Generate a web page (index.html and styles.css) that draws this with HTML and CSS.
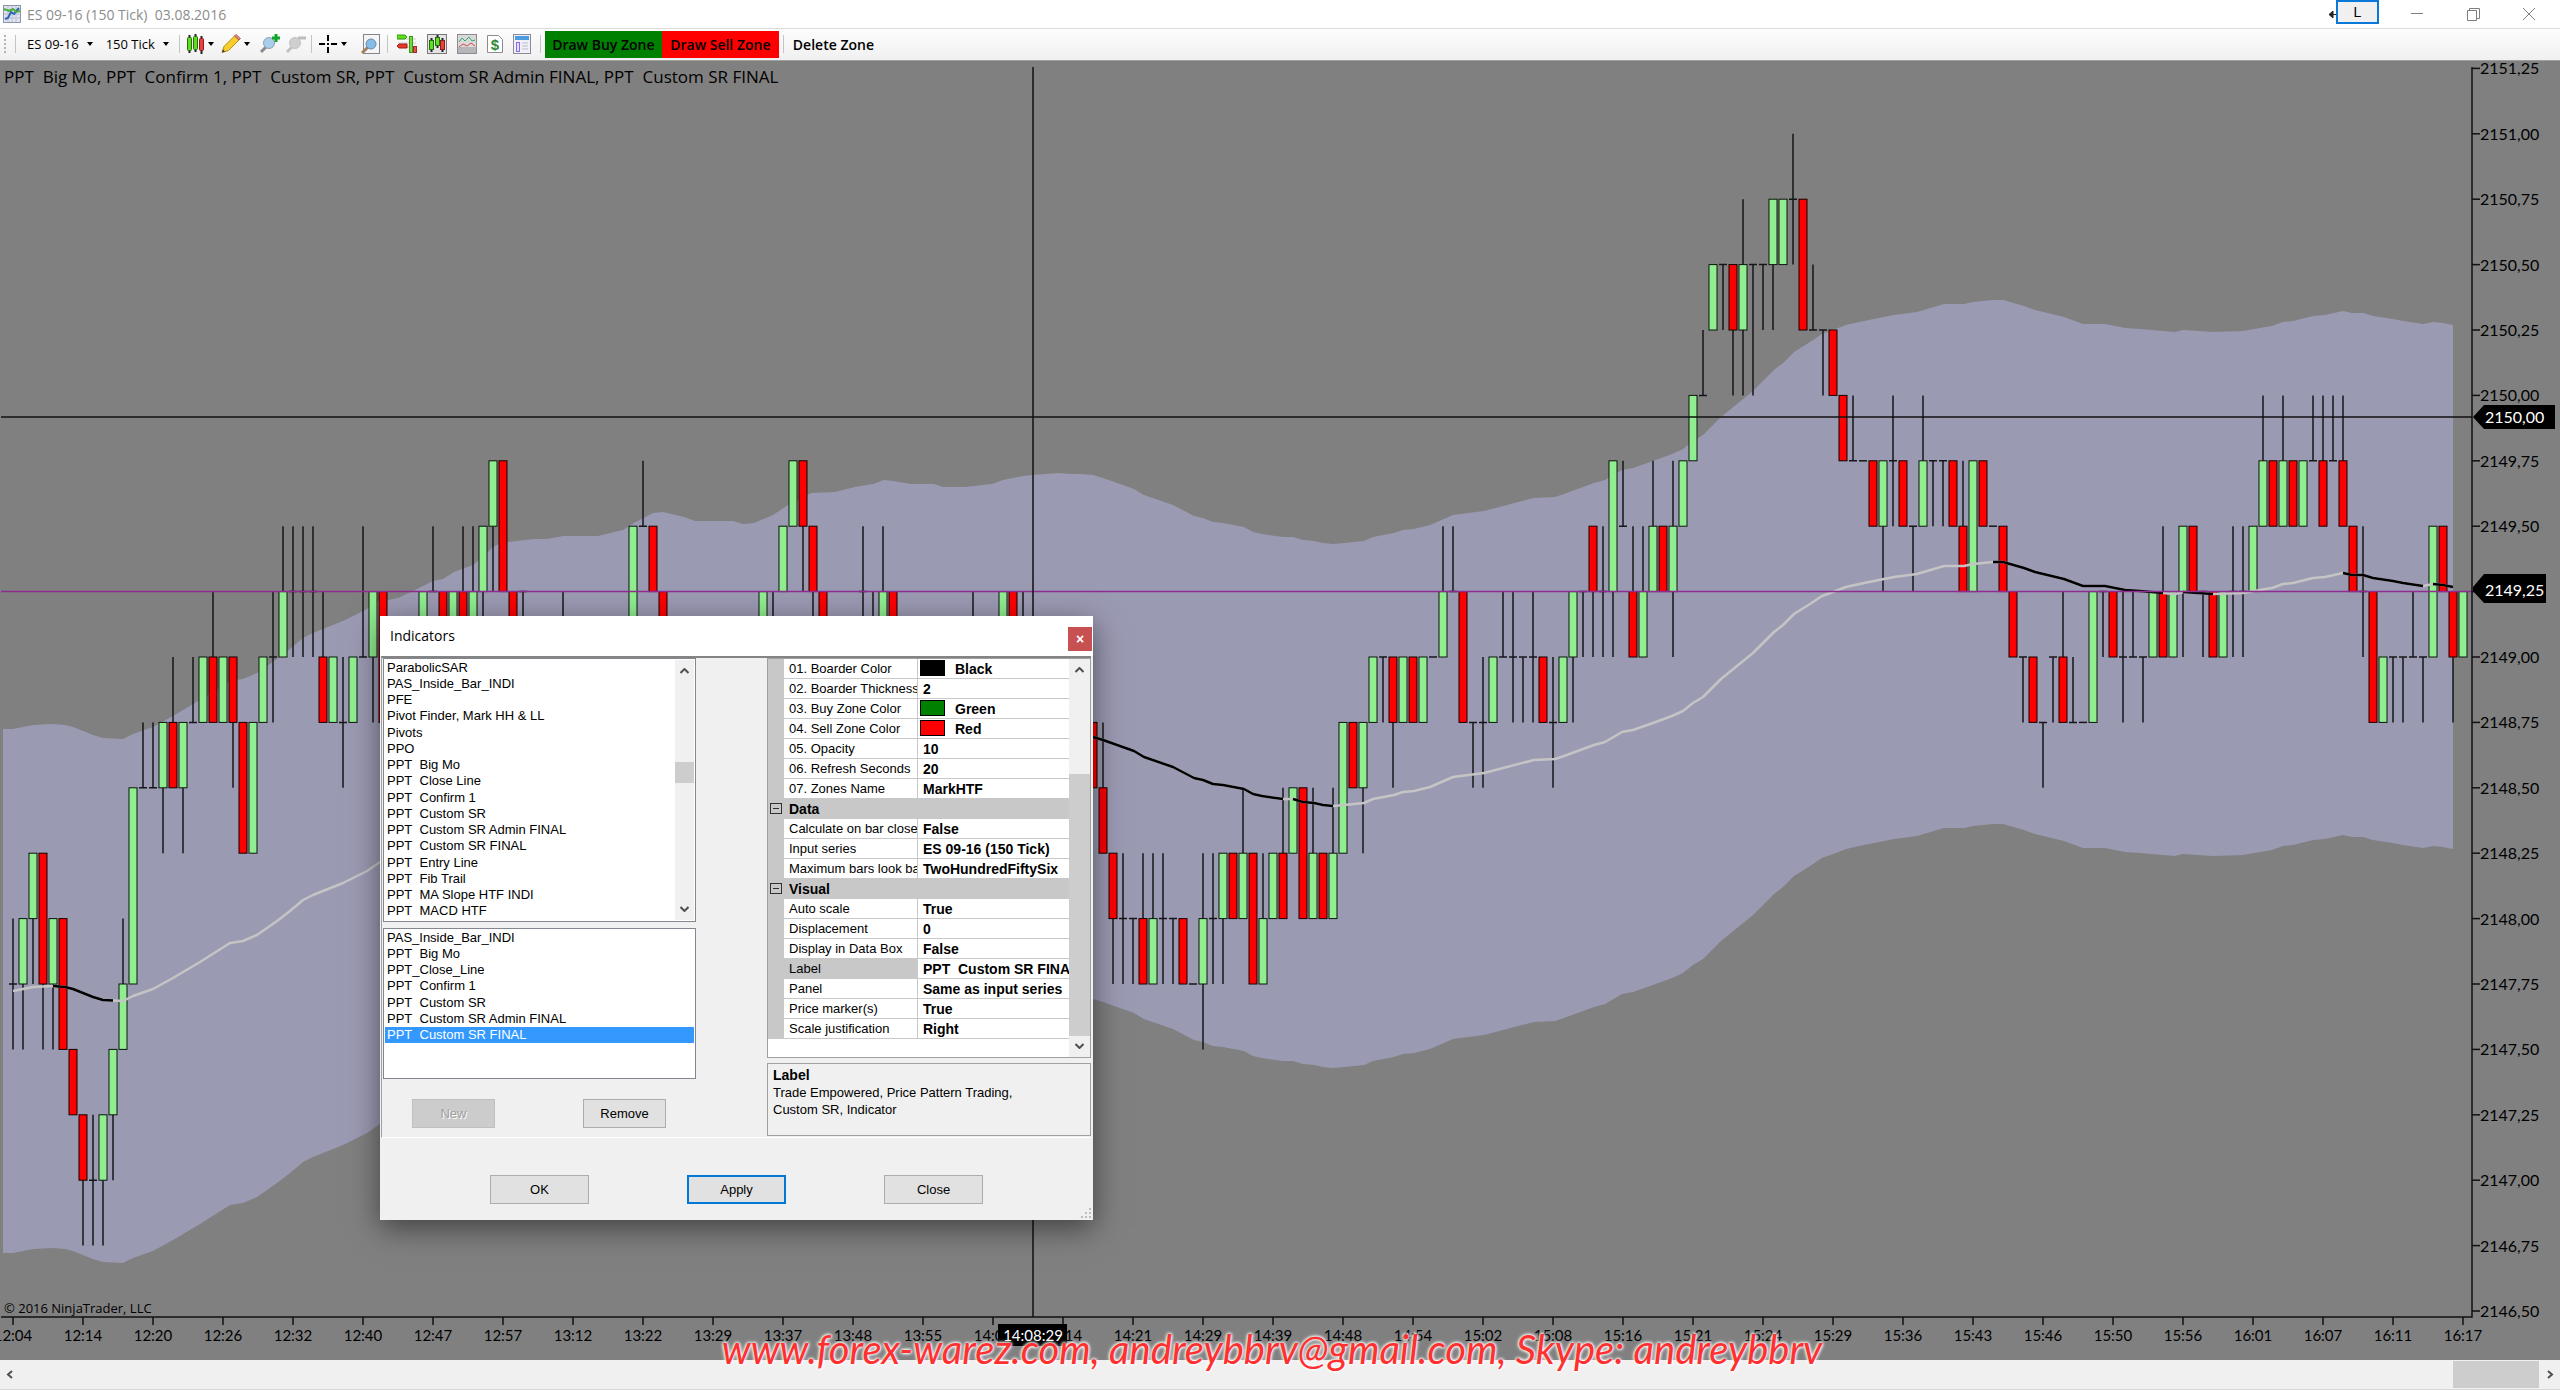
FILE: index.html
```html
<!DOCTYPE html>
<html lang="en">
<head>
    <meta charset="UTF-8">
    <meta name="viewport" content="width=device-width, initial-scale=1.0">
    <title>ES 09-16 (150 Tick)  03.08.2016</title>
    <link rel="stylesheet" href="styles.css">
</head>
<body>
    <header class="titlebar">
        <svg class="app-icon" width="18" height="18" viewBox="0 0 18 18">
            <rect x="0.5" y="0.5" width="17" height="17" fill="#dfe3f0" stroke="#8f95ad"/>
            <path d="M1 5h16M1 9h16M1 13h16M5 1v16M9 1v16M13 1v16" stroke="#b9bfd6" fill="none"/>
            <path d="M2 14l3-1 3-6 3 2 5-6" stroke="#2f62b5" stroke-width="2" fill="none"/>
            <path d="M1 4l5 2 4-2 3 3 4-1" stroke="#4caf3a" stroke-width="2" fill="none"/>
        </svg>
        <h1>ES 09-16 (150 Tick)&nbsp; 03.08.2016</h1>
        <div class="window-controls">
            <svg class="link-arrow" width="7" height="9" viewBox="0 0 7 9"><path d="M0 4.500L4 1v7zM3 4.500h4" stroke="#222" fill="#222"/></svg>
            <button class="link-button" type="button">L</button>
            <button class="win-button" type="button" aria-label="Minimize"><svg width="12" height="12" viewBox="0 0 12 12"><path d="M0 5.500h12"/></svg></button>
            <button class="win-button" type="button" aria-label="Restore"><svg width="13" height="13" viewBox="0 0 13 13"><path d="M0.500 2.500h9v10h-9zM2.500 2.500v-2h10v10h-3"/></svg></button>
            <button class="win-button" type="button" aria-label="Close window"><svg width="12" height="12" viewBox="0 0 12 12"><path d="M0 0l12 12M12 0l-12 12"/></svg></button>
        </div>
    </header>

    <nav class="toolbar">
        <span class="grip"></span>
        <span class="sep"></span>
        <button class="tool text" type="button">ES 09-16 <i class="caret"></i></button>
        <button class="tool text period" type="button">150 Tick <i class="caret"></i></button>
        <span class="sep"></span>
        <button class="tool" type="button" aria-label="Chart style">
            <svg width="19" height="20" viewBox="0 0 19 20">
                <path d="M3.500 1v18M9.500 0v18M15.500 2v18" stroke="#222" stroke-width="2"/>
                <rect x="1.500" y="3.500" width="4" height="13" rx="1" fill="#5ce01c" stroke="#2a6a10"/>
                <rect x="7.500" y="2.500" width="4" height="13" rx="1" fill="#5ce01c" stroke="#2a6a10"/>
                <rect x="13.500" y="4.500" width="4" height="12" rx="1" fill="#e84040" stroke="#8c1c1c"/>
            </svg>
            <i class="caret"></i>
        </button>
        <button class="tool" type="button" aria-label="Drawing tools">
            <svg width="20" height="20" viewBox="0 0 20 20">
                <path d="M1 18.500l2-6L13.500 2l4.500 4L7.500 16.500z" fill="#f6cf2c" stroke="#b98a14"/>
                <path d="M13.500 2l1.500-1.500 4.500 4L18 6z" fill="#e58a8a" stroke="#b45f5f"/>
                <path d="M1 18.500l1-3 2 2z" fill="#333"/>
            </svg>
            <i class="caret"></i>
        </button>
        <button class="tool zoom-tool" type="button" aria-label="Zoom in">
            <svg width="22" height="20" viewBox="0 0 22 20">
                <path d="M2 18l6-6" stroke="#8b8b8b" stroke-width="3"/>
                <circle cx="10" cy="9" r="5.500" fill="#a9cdea" stroke="#8fa2b2"/>
                <path d="M17 0v8M13 4h8" stroke="#12a52a" stroke-width="3"/>
            </svg>
        </button>
        <button class="tool zoom-tool" type="button" aria-label="Zoom out">
            <svg width="22" height="20" viewBox="0 0 22 20">
                <path d="M2 18l6-6" stroke="#c2c2c2" stroke-width="3"/>
                <circle cx="10" cy="9" r="5.500" fill="#cfcfcf" stroke="#c2c2c2"/>
                <path d="M13 4h8" stroke="#bdbdbd" stroke-width="3"/>
            </svg>
        </button>
        <span class="sep"></span>
        <button class="tool" type="button" aria-label="Cross hair">
            <svg width="20" height="20" viewBox="0 0 20 20"><path d="M10 1v6M10 13v6M1 10h6M13 10h6M9 10h2" stroke="#000" stroke-width="2"/></svg>
            <i class="caret"></i>
        </button>
        <button class="tool data-box" type="button" aria-label="Data box">
            <svg width="20" height="22" viewBox="0 0 20 22">
                <rect x="2.500" y="1.500" width="16" height="19" fill="#f5f5f7" stroke="#85858c"/>
                <path d="M1 20l6-6" stroke="#a07e5a" stroke-width="3"/>
                <circle cx="10" cy="11" r="5" fill="#86bce8" stroke="#6b8aa5"/>
            </svg>
        </button>
        <span class="sep"></span>
        <button class="tool icon" type="button" aria-label="Chart trader">
            <svg width="20" height="20" viewBox="0 0 20 20">
                <path d="M1 5h18M1 9h18M1 13h18" stroke="#c9c9c9"/>
                <path d="M0 1h8l2 2-2 2H0z" fill="#5ce01c" stroke="#3c9a14"/>
                <path d="M0 12l2-2h8v4H2z" fill="#e83a2a" stroke="#a01d12"/>
                <rect x="12.500" y="2.500" width="3" height="16" fill="#6fdc3a" stroke="#3f9a1a"/>
                <rect x="16.500" y="12.500" width="3" height="6" fill="#e85050" stroke="#a52a2a"/>
            </svg>
        </button>
        <button class="tool icon" type="button" aria-label="Data series">
            <svg width="20" height="20" viewBox="0 0 20 20">
                <rect x="0.500" y="0.500" width="19" height="19" fill="#e3e3e6" stroke="#77777c"/>
                <path d="M4.500 4v14M10.500 1v13M15.500 4v14" stroke="#222" stroke-width="2"/>
                <rect x="2.500" y="6.500" width="4" height="9" fill="#5ce01c" stroke="#246b10"/>
                <rect x="8.500" y="3.500" width="4" height="8" fill="#5ce01c" stroke="#246b10"/>
                <rect x="13.500" y="6.500" width="4" height="9" fill="#e84040" stroke="#8c1c1c"/>
            </svg>
        </button>
        <button class="tool icon" type="button" aria-label="Indicators">
            <svg width="20" height="20" viewBox="0 0 20 20">
                <rect x="0.500" y="0.500" width="19" height="19" fill="#d9d9dc" stroke="#8b8b90"/>
                <rect x="1" y="13" width="18" height="6" fill="#b5b5ba"/>
                <path d="M2 8l3-4 3 3 4-4 3 4 3-1" stroke="#35a866" fill="none"/>
                <path d="M2 13l4-3 4 2 4-3 4 3" stroke="#d84a4a" fill="none"/>
            </svg>
        </button>
        <button class="tool icon" type="button" aria-label="Strategies">
            <svg width="16" height="20" viewBox="0 0 16 20">
                <path d="M0.500 1.500h11l4 4v13h-15z" fill="#fff" stroke="#8b8b90"/>
                <text class="dollar" x="8" y="16">$</text>
            </svg>
        </button>
        <button class="tool icon" type="button" aria-label="Properties">
            <svg width="18" height="20" viewBox="0 0 18 20">
                <rect x="0.500" y="0.500" width="17" height="19" fill="#f0f1f8" stroke="#8b8b98"/>
                <rect x="2" y="2" width="14" height="4" fill="#4a9be0"/>
                <rect x="3.500" y="8.500" width="3" height="9" fill="#e6dcff" stroke="#8b6be8"/>
                <path d="M9 9h6M9 12h6M9 15h6" stroke="#b9bbca"/>
            </svg>
        </button>
        <span class="sep"></span>
        <button class="tool zone buy" type="button">Draw Buy Zone</button>
        <button class="tool zone sell" type="button">Draw Sell Zone</button>
        <span class="sep"></span>
        <button class="tool zone" type="button">Delete Zone</button>
    </nav>

    <main class="workspace">
        <svg class="chart" id="chart" viewBox="0 61 2560 1299" preserveAspectRatio="none" role="img" aria-label="ES 09-16 150 tick chart"></svg>

        <section class="dialog" role="dialog" aria-labelledby="dialog-title">
            <div class="dialog-title">
                <h2 id="dialog-title">Indicators</h2>
                <button class="dialog-close" type="button" aria-label="Close dialog">×</button>
            </div>
            <div class="dialog-body">
                <div class="lists">
                    <div class="list-frame available">
                        <select class="list" multiple aria-label="Available indicators">
                            <option>ParabolicSAR</option>
                            <option>PAS_Inside_Bar_INDI</option>
                            <option>PFE</option>
                            <option>Pivot Finder, Mark HH &amp; LL</option>
                            <option>Pivots</option>
                            <option>PPO</option>
                            <option>PPT&nbsp; Big Mo</option>
                            <option>PPT&nbsp; Close Line</option>
                            <option>PPT&nbsp; Confirm 1</option>
                            <option>PPT&nbsp; Custom SR</option>
                            <option>PPT&nbsp; Custom SR Admin FINAL</option>
                            <option>PPT&nbsp; Custom SR FINAL</option>
                            <option>PPT&nbsp; Entry Line</option>
                            <option>PPT&nbsp; Fib Trail</option>
                            <option>PPT&nbsp; MA Slope HTF INDI</option>
                            <option>PPT&nbsp; MACD HTF</option>
                        </select>
                        <div class="scroll list-scroll">
                            <svg width="9" height="6" viewBox="0 0 9 6"><path d="M0.500 5L4.500 1l4 4"/></svg>
                            <span class="thumb"></span>
                            <svg width="9" height="6" viewBox="0 0 9 6"><path d="M0.500 1l4 4 4-4"/></svg>
                        </div>
                    </div>
                    <div class="list-frame applied">
                        <select class="list" multiple aria-label="Applied indicators">
                            <option>PAS_Inside_Bar_INDI</option>
                            <option>PPT&nbsp; Big Mo</option>
                            <option>PPT_Close_Line</option>
                            <option>PPT&nbsp; Confirm 1</option>
                            <option>PPT&nbsp; Custom SR</option>
                            <option>PPT&nbsp; Custom SR Admin FINAL</option>
                            <option selected>PPT&nbsp; Custom SR FINAL</option>
                        </select>
                    </div>
                    <div class="list-buttons">
                        <button class="push" type="button" disabled>New</button>
                        <button class="push" type="button">Remove</button>
                    </div>
                </div>

                <div class="properties">
                    <div class="grid-frame">
                        <table class="grid">
                            <colgroup><col class="gutter"><col class="name"><col></colgroup>
                            <tbody>
                                <tr><td></td><th>01. Boarder Color</th><td><span class="swatch black"></span>Black</td></tr>
                                <tr><td></td><th>02. Boarder Thickness</th><td>2</td></tr>
                                <tr><td></td><th>03. Buy Zone Color</th><td><span class="swatch green"></span>Green</td></tr>
                                <tr><td></td><th>04. Sell Zone Color</th><td><span class="swatch red"></span>Red</td></tr>
                                <tr><td></td><th>05. Opacity</th><td>10</td></tr>
                                <tr><td></td><th>06. Refresh Seconds</th><td>20</td></tr>
                                <tr><td></td><th>07. Zones Name</th><td>MarkHTF</td></tr>
                                <tr class="group"><td><span class="collapse"></span></td><th colspan="2">Data</th></tr>
                                <tr><td></td><th>Calculate on bar close</th><td>False</td></tr>
                                <tr><td></td><th>Input series</th><td>ES 09-16 (150 Tick)</td></tr>
                                <tr><td></td><th>Maximum bars look back</th><td>TwoHundredFiftySix</td></tr>
                                <tr class="group"><td><span class="collapse"></span></td><th colspan="2">Visual</th></tr>
                                <tr><td></td><th>Auto scale</th><td>True</td></tr>
                                <tr><td></td><th>Displacement</th><td>0</td></tr>
                                <tr><td></td><th>Display in Data Box</th><td>False</td></tr>
                                <tr class="current"><td></td><th>Label</th><td>PPT&nbsp; Custom SR FINAL</td></tr>
                                <tr><td></td><th>Panel</th><td>Same as input series</td></tr>
                                <tr><td></td><th>Price marker(s)</th><td>True</td></tr>
                                <tr><td></td><th>Scale justification</th><td>Right</td></tr>
                            </tbody>
                        </table>
                        <div class="scroll grid-scroll">
                            <svg width="9" height="6" viewBox="0 0 9 6"><path d="M0.500 5L4.500 1l4 4"/></svg>
                            <span class="thumb"></span>
                            <svg width="9" height="6" viewBox="0 0 9 6"><path d="M0.500 1l4 4 4-4"/></svg>
                        </div>
                    </div>
                    <div class="help">
                        <h3>Label</h3>
                        <p>Trade Empowered, Price Pattern Trading, Custom SR, Indicator</p>
                    </div>
                </div>
            </div>
            <div class="dialog-footer">
                <button class="push wide" type="button">OK</button>
                <button class="push wide default" type="button">Apply</button>
                <button class="push wide" type="button">Close</button>
            </div>
            <svg class="size-grip" width="12" height="12" viewBox="0 0 12 12"><path d="M9 1h2v2H9zM9 5h2v2H9zM9 9h2v2H9zM5 5h2v2H5zM5 9h2v2H5zM1 9h2v2H1z" fill="#bdbdbd"/></svg>
        </section>

        <p class="watermark">www.forex-warez.com, andreybbrv@gmail.com, Skype: andreybbrv</p>
    </main>

    <div class="chart-scroll">
        <svg width="8" height="9" viewBox="0 0 8 9"><path d="M6 1L2 4.500 6 8"/></svg>
        <span class="thumb"></span>
        <svg width="8" height="9" viewBox="0 0 8 9"><path d="M2 1l4 3.500L2 8"/></svg>
    </div>

    <script src="chart.js"></script>
</body>
</html>
```
FILE: styles.css
```css
* {
    box-sizing: border-box;
}

body {
    display: flex;
    flex-direction: column;
    height: 100vh;
    margin: 0;
    overflow: hidden;
    background: #fff;
    color: #000;
    font-family: "Liberation Sans", Arial, sans-serif;
    font-size: 13px;
}

h1, h2, h3, p {
    margin: 0;
    font-weight: normal;
}

button {
    font: inherit;
    color: inherit;
}

/* Title bar */
.titlebar {
    display: flex;
    align-items: center;
    height: 29px;
    padding: 0 3px;
    font-family: "Open Sans", sans-serif;
    border-bottom: 1px solid #dcdcdc;
}

.titlebar h1 {
    flex: 1;
    margin-left: 6px;
    font-size: 14px;
    color: #8c8c8c;
}

.window-controls {
    display: flex;
    align-items: center;
    height: 100%;
}

.link-button {
    width: 43px;
    height: 24px;
    margin-right: 10px;
    padding: 0;
    align-self: flex-start;
    font-family: "Liberation Sans", Arial, sans-serif;
    font-size: 14px;
    background: #f0f0f0;
    border: 2px solid #0a78d6;
}

.win-button {
    display: flex;
    align-items: center;
    justify-content: center;
    width: 56px;
    height: 28px;
    padding: 0;
    background: none;
    border: 0;
}

.win-button svg {
    stroke: #808080;
    fill: none;
}

/* Toolbar */
.toolbar {
    display: flex;
    align-items: center;
    height: 32px;
    padding: 1px 0 2px 4px;
    background: linear-gradient(#fdfdfd, #f0f0f0);
    border-bottom: 1px solid #a0a0a0;
    font-family: "Open Sans", sans-serif;
}

.grip {
    width: 2px;
    height: 18px;
    background: repeating-linear-gradient(#b4b4b4 0 2px, transparent 2px 4px);
}

.sep {
    width: 1px;
    height: 18px;
    margin: 0 4px;
    background: #c4c4c4;
}

.grip + .sep {
    margin-left: 9px;
}

.tool {
    display: flex;
    align-items: center;
    height: 27px;
    padding: 0 2px;
    background: none;
    border: 0;
    white-space: nowrap;
}

.tool.text {
    gap: 8px;
    padding: 0 6px 0 7px;
    font-size: 13px;
}

.tool.icon {
    padding: 0 5px;
}

.zoom-tool {
    margin-left: 4px;
    padding: 0;
}

.data-box {
    margin: 0 0 0 7px;
}

.caret {
    margin: 0 3px;
    border: 3px solid transparent;
    border-top: 4px solid #000;
    border-bottom: 0;
}

.tool.text .caret {
    margin: 0;
}

.dollar {
    font-family: "Liberation Sans", Arial, sans-serif;
    font-size: 15px;
    font-weight: bold;
    text-anchor: middle;
    fill: #2e8b35;
}

.zone {
    justify-content: center;
    padding: 0 5px;
    font-size: 14px;
    font-weight: 600;
}

.buy, .sell {
    width: 117px;
}

.buy {
    background: #008000;
}

.sell {
    background: #f00;
}

/* Chart */
.workspace {
    position: relative;
    flex: 1;
    min-height: 0;
    background: #808080;
}

.chart {
    display: block;
    width: 100%;
    height: 100%;
    font-family: Lato, sans-serif;
}

.chart text {
    font-size: 16px;
}

.chart .indicators {
    font-family: "Open Sans", sans-serif;
    font-size: 17px;
}

.chart .copyright {
    font-family: "Open Sans", sans-serif;
    font-size: 13px;
}

.chart .time {
    font-size: 15px;
    text-anchor: middle;
}

.band {
    fill: #9b9ab3;
}

.wick {
    stroke: #16161a;
    stroke-width: 1.5;
}

.up {
    fill: #90ee90;
    stroke: #0a140a;
}

.down {
    fill: #f00;
    stroke: #140000;
}

.average {
    fill: none;
    stroke: #c4c4c4;
    stroke-width: 2.5;
    stroke-linejoin: round;
}

.average.falling {
    stroke: #000;
}

.axis {
    fill: none;
    stroke: #111;
    stroke-width: 1.5;
}

.price-line {
    stroke: #8f2c90;
    stroke-width: 1.5;
}

.marker-text {
    fill: #fff;
}

.watermark {
    position: absolute;
    left: 0;
    right: 0;
    bottom: -12px;
    padding-right: 16px;
    text-align: center;
    font-family: Lato, sans-serif;
    font-style: italic;
    font-size: 40px;
    line-height: 46px;
    white-space: nowrap;
    color: #ff3030;
    text-shadow: 0 0 3px #fff, 0 0 3px #fff, 0 0 4px #fff;
    z-index: 2;
    pointer-events: none;
}

/* Bottom scroll bar */
.chart-scroll {
    display: flex;
    align-items: center;
    height: 30px;
    padding: 0 6px;
    background: #f0f0f0;
    border-bottom: 1px solid #d9d9d9;
}

.chart-scroll .thumb {
    width: 86px;
    height: 27px;
    margin: 0 7px 0 auto;
    background: #cdcdcd;
}

.chart-scroll svg, .scroll svg {
    flex: none;
    fill: none;
    stroke: #505050;
    stroke-width: 2;
}

/* Indicators dialog */
.dialog {
    position: absolute;
    left: 380px;
    top: 555px;
    width: 713px;
    display: flex;
    flex-direction: column;
    background: #f0f0f0;
    box-shadow: 0 8px 28px rgba(0, 0, 0, 0.5);
}

.dialog-title {
    display: flex;
    justify-content: space-between;
    height: 40px;
    padding-left: 10px;
    background: #fff;
}

.dialog-title h2 {
    font-family: "Open Sans", sans-serif;
    font-size: 14px;
    line-height: 39px;
}

.dialog-close {
    width: 24px;
    height: 24px;
    margin: 11px 1px 0 0;
    padding: 0;
    background: #c75050;
    border: 0;
    color: #fff;
    font-size: 14px;
    font-weight: bold;
    line-height: 22px;
}

.dialog-body {
    display: flex;
    justify-content: space-between;
    margin: 0 2px 0 1px;
    padding: 0 0 1px 1px;
    border-top: 2px solid #848484;
    border-left: 1px solid #a0a0a0;
    border-bottom: 1px solid #fff;
}

.lists {
    width: 313px;
}

.list-frame {
    display: flex;
    padding: 1px;
    background: #fff;
    border: 1px solid #828790;
}

.available {
    height: 264px;
}

.applied {
    height: 151px;
    margin-top: 6px;
}

.list {
    flex: 1;
    min-width: 0;
    height: 100%;
    padding: 0;
    overflow: hidden;
    background: #fff;
    border: 0;
    outline: 0;
    color: #000;
    font-family: "Liberation Sans", Arial, sans-serif;
    font-size: 13px;
}

.list option {
    min-height: 16px;
    height: 16px;
    padding: 0 2px;
    line-height: 16px;
}

.list option:nth-child(4n) {
    height: 17px;
}

.list option:checked {
    color: #fff;
    background: #39f linear-gradient(#39f, #39f);
}

.scroll {
    display: flex;
    flex-direction: column;
    align-items: center;
    background: #f0f0f0;
}

.scroll .thumb {
    width: 100%;
    background: #cdcdcd;
}

.list-scroll {
    width: 19px;
    padding: 8px 0;
}

.list-scroll .thumb {
    height: 21px;
    margin: 88px 0 auto;
}

.list-buttons {
    display: flex;
    gap: 88px;
    padding: 20px 0 0 29px;
}

.push {
    width: 83px;
    height: 29px;
    padding: 0;
    background: #e1e1e1;
    border: 1px solid #adadad;
}

.push:disabled {
    background: #ccc;
    border-color: #bfbfbf;
    color: #a0a0a0;
    text-shadow: 1px 1px #fff;
}

.push.wide {
    width: 99px;
}

.push.default {
    border: 2px solid #0078d7;
}

.properties {
    width: 324px;
}

.grid-frame {
    display: flex;
    height: 400px;
    background: #fff;
    border: 1px solid #a0a0a0;
}

.grid {
    flex: 1;
    width: 0;
    height: 380px;
    table-layout: fixed;
    border-collapse: separate;
    border-spacing: 0;
}

.grid .gutter {
    width: 16px;
}

.grid .name {
    width: 134px;
}

.grid td, .grid th {
    height: 20px;
    padding: 0 0 0 5px;
    border-bottom: 1px solid #c8c8c8;
    font-size: 14px;
    font-weight: bold;
    line-height: 18px;
    text-align: left;
    white-space: nowrap;
    overflow: hidden;
}

.grid th {
    border-right: 1px solid #c8c8c8;
    font-size: 13px;
    font-weight: normal;
}

.grid td:first-child, .grid .group th, .grid .current th {
    background: #c8c8c8;
}

.grid td:first-child {
    padding: 0 0 0 2px;
}

.grid .group th {
    font-size: 14px;
    font-weight: bold;
}

.swatch {
    display: inline-block;
    width: 25px;
    height: 16px;
    margin: 0 10px 0 -3px;
    border: 1px solid #000;
    vertical-align: top;
}

.black {
    background: #000;
}

.green {
    background: #008000;
}

.red {
    background: #f00;
}

.collapse {
    display: block;
    width: 12px;
    height: 11px;
    border: 1px solid #303030;
    background: linear-gradient(#303030, #303030) center / 6px 1px no-repeat;
}

.grid-scroll {
    width: 21px;
    padding: 8px 0;
}

.grid-scroll .thumb {
    height: 262px;
    margin: auto 0 7px;
}

.help {
    height: 73px;
    margin-top: 5px;
    padding: 3px 40px 0 5px;
    border: 1px solid #a0a0a0;
    line-height: 17px;
}

.help h3 {
    font-size: 14px;
    font-weight: bold;
    line-height: 17px;
}

.dialog-footer {
    display: flex;
    justify-content: center;
    gap: 98px;
    height: 82px;
    padding-top: 37px;
}

.size-grip {
    position: absolute;
    right: 1px;
    bottom: 1px;
}
```
FILE: chart.js
```js
// Price scale: tick 0 is 2146,50 and every tick is a quarter point
const BASE_Y = 1311;
const TICK = 65.4;
const FIRST_X = 13;
const STEP = 10;
const AXIS_X = 2472;
const AXIS_Y = 1317;
const ENVELOPE = 262;

// One word per bar: open, high, low, close (a = tick 0, b = tick 1, ...)
const bars = (
    'fgef fgeg ghfh hhef fgeg ggee eedd ddbc cdbc cdbd dece egef fifi ijii ijii ijhj jkii ijhj jkjj jkjk ' +
    'kljj jkjk kkij jjhh hjhj jkjk kljk kmkl lmkl lmkl lmkl kljj jkjk jkij jkjk kmkk kljl lljj kkkk kkkk ' +
    'kkkk klkl lmll llkk klkl lmkk kmkl lmkm mnln nnll llkk llkl kkkk kkkk kkkk klkk kkkk kkkk kkkk kkkk ' +
    'kkkk kkkk kmkm mnmm mmll llkk kkkk kkkk kkkk kkkk kkkk kkkk kkkk kkkk kkkk klkl klkk lmlm mnmn nnlm ' +
    'mmkl llkk kkkk kkkk kkkk lmkl klkk kmkl llkk kkkk kkkk kkkk kkkk kkkk kkkk kkkk klkk kkkk kkkk klkl ' +
    'llkk klkk kkkk kkkk kkkk kkkk kkkk kkkk jjii ijhh hhfg ghfg ggfg ghff fhfg ghfg ggfg ggff ffff fheg ' +
    'ghfg ghfh hhgg gigh hhff fhfg ghgh higg hihi iigg gigh hhgg gigh hjhj jjii ijhj jkjk kkjk kkij jkjk ' +
    'kkjj jkjk kkkk kmkl lmll lljj jjij jkij jkjk klkk kljk kkjk kljk kkjj jkij jkjk kljl llkl mmkl lmkl ' +
    'lnkn mnmm lmkk kmkl lnlm mmll lnkm mnmn nono opoo pqpq qqpq qqop proq qqoq qqpq qrpr qrqr rsqr rrpp ' +
    'pqpp ppop ppoo oonn nonn nnnn nnmm mnln nomn nnmm mmlm momn nnmn nnmn nnmm mnll lnln nnmm mmmm mmll ' +
    'llkk kkjk kkjj jjij kkjk kljj jkjj jjjj jljl llkl llkk kljk klkk kkjk klkl lmkk klkl lmkm mmll llkl ' +
    'llkk klkl lmkl lmkl lmlm momn nnmm momn nnmm mnmn nonn nomm nonn nomm mmll lmkl lljj jkjk kkjk kkjk ' +
    'klkk kkjk kmkm mmll lljk klkl'
).split(' ');

// Upper envelope as x, y pairs; the average runs in the middle of the envelope
const upper = [
    [3, 729], [13, 729], [33, 725], [53, 724], [65, 725], [73, 727], [93, 735], [103, 738], [123, 739], [133, 734],
    [153, 727], [173, 716], [200, 700], [230, 681], [243, 679], [257, 673], [277, 659], [290, 649], [303, 638],
    [313, 633], [343, 621], [367, 609], [380, 600], [388, 600], [398, 598], [413, 591], [433, 581], [443, 579],
    [454, 572], [473, 565], [483, 557], [492, 548], [500, 543], [534, 539], [547, 539], [563, 536], [598, 536],
    [623, 530], [634, 523], [653, 513], [663, 512], [684, 517], [695, 521], [733, 521], [743, 524], [754, 523],
    [773, 515], [788, 505], [797, 500], [811, 493], [835, 492], [855, 487], [873, 484], [884, 480], [893, 481],
    [911, 484], [934, 484], [943, 487], [965, 487], [992, 484], [1003, 480], [1023, 476], [1033, 475], [1045, 474],
    [1059, 473], [1070, 474], [1080, 474], [1093, 475], [1103, 478], [1134, 489], [1144, 495], [1173, 505],
    [1194, 516], [1203, 518], [1213, 522], [1223, 523], [1244, 527], [1253, 532], [1262, 534], [1283, 537],
    [1293, 537], [1303, 540], [1314, 541], [1323, 543], [1333, 544], [1344, 543], [1364, 541], [1373, 537],
    [1394, 533], [1403, 530], [1414, 529], [1430, 525], [1453, 515], [1484, 511], [1534, 498], [1555, 497],
    [1564, 494], [1594, 483], [1605, 480], [1622, 470], [1633, 468], [1653, 461], [1672, 454], [1683, 449],
    [1693, 441], [1703, 435], [1721, 417], [1753, 391], [1774, 370], [1783, 363], [1794, 352], [1810, 342],
    [1822, 334], [1833, 330], [1846, 325], [1864, 321], [1874, 319], [1894, 315], [1917, 312], [1944, 304],
    [1964, 304], [1973, 302], [1993, 300], [2003, 300], [2024, 306], [2035, 310], [2064, 317], [2083, 324],
    [2105, 324], [2125, 328], [2140, 329], [2163, 331], [2175, 332], [2183, 330], [2213, 332], [2243, 331],
    [2260, 328], [2272, 326], [2283, 322], [2293, 321], [2313, 316], [2325, 315], [2343, 311], [2352, 313],
    [2363, 313], [2373, 316], [2393, 319], [2403, 321], [2423, 324], [2433, 322], [2443, 323], [2453, 325]
];

// Stretches where the average is falling
const falling = [[53, 113], [1093, 1283], [1293, 1333], [1993, 2163], [2183, 2213], [2343, 2423], [2433, 2453]];

const times = ['12:04', '12:14', '12:20', '12:26', '12:32', '12:40', '12:47', '12:57', '13:12', '13:22', '13:29', '13:37',
    '13:48', '13:55', '14:03', '14:14', '14:21', '14:29', '14:39', '14:48', '14:54', '15:02', '15:08', '15:16', '15:21',
    '15:24', '15:29', '15:36', '15:43', '15:46', '15:50', '15:56', '16:01', '16:07', '16:11', '16:17'];

const priceY = tick => BASE_Y - tick * TICK;
const tickOf = letter => letter.charCodeAt(0) - 97;

function upperAt(x) {
    const next = Math.max(1, upper.findIndex(point => point[0] >= x));
    const [x0, y0] = upper[next - 1];
    const [x1, y1] = upper[next];
    return y0 + (y1 - y0) * (x - x0) / (x1 - x0);
}

function averagePath(from, to) {
    const inside = upper.filter(point => point[0] > from && point[0] < to);
    const points = [[from, upperAt(from)], ...inside, [to, upperAt(to)]];
    return 'M' + points.map(([x, y]) => `${x} ${y + ENVELOPE}`).join('L');
}

function drawBar(word, i) {
    const [open, high, low, close] = [...word].map(tickOf);
    const x = FIRST_X + i * STEP;
    const top = priceY(Math.max(open, close));
    const bottom = priceY(Math.min(open, close));
    if (open === close) {
        return `<path class="wick" d="M${x} ${priceY(high)}V${priceY(low)}M${x - 4} ${top}h8"/>`;
    }
    return `<path class="wick" d="M${x} ${priceY(high)}V${top}M${x} ${bottom}V${priceY(low)}"/>` +
        `<rect class="${close > open ? 'up' : 'down'}" x="${x - 4}" y="${top}" width="8" height="${bottom - top}"/>`;
}

function drawChart() {
    const band = 'M' + upper.map(([x, y]) => `${x} ${y}`).join('L') +
        'L' + [...upper].reverse().map(([x, y]) => `${x} ${y + 2 * ENVELOPE}`).join('L') + 'Z';
    let out = `<path class="band" d="${band}"/>`;
    out += bars.map(drawBar).join('');
    out += `<path class="average" d="${averagePath(13, 2453)}"/>`;
    out += falling.map(([from, to]) => `<path class="average falling" d="${averagePath(from, to)}"/>`).join('');
    out += `<path class="price-line" d="M1 ${priceY(11)}H${AXIS_X}"/>`;

    // Cross hair
    out += `<path class="axis" d="M1 417H${AXIS_X}M1033 67V${AXIS_Y}"/>`;

    // Price axis
    out += `<path class="axis" d="M${AXIS_X} 67V${AXIS_Y}H1"/>`;
    for (let tick = 0; tick <= 19; tick++) {
        const y = priceY(tick);
        out += `<path class="axis" d="M${AXIS_X} ${y}h8"/>`;
        if (tick !== 11) {
            const label = (2146.5 + tick / 4).toFixed(2).replace('.', ',');
            out += `<text x="2480" y="${y + 6}">${label}</text>`;
        }
    }
    out += '<path d="M2473 417l11-12h71v24h-71zM2473 587l11-13h62v29h-62l-11-12z"/>';
    out += '<text class="marker-text" x="2485" y="423">2150,00</text>';
    out += '<text class="marker-text" x="2485" y="596">2149,25</text>';

    // Time axis
    times.forEach((time, i) => {
        const x = FIRST_X + i * 7 * STEP;
        out += `<path class="axis" d="M${x} ${AXIS_Y}v8"/><text class="time" x="${x}" y="1341">${time}</text>`;
    });
    out += '<rect x="998" y="1324" width="69" height="22"/>';
    out += '<text class="time marker-text" x="1033" y="1341">14:08:29</text>';

    out += '<text class="indicators" x="4" y="83">PPT\u00a0 Big Mo, PPT\u00a0 Confirm 1, PPT\u00a0 Custom SR, ' +
        'PPT\u00a0 Custom SR Admin FINAL, PPT\u00a0 Custom SR FINAL</text>';
    out += '<text class="copyright" x="4" y="1313">© 2016 NinjaTrader, LLC</text>';
    document.getElementById('chart').innerHTML = out;
}

drawChart();
```
